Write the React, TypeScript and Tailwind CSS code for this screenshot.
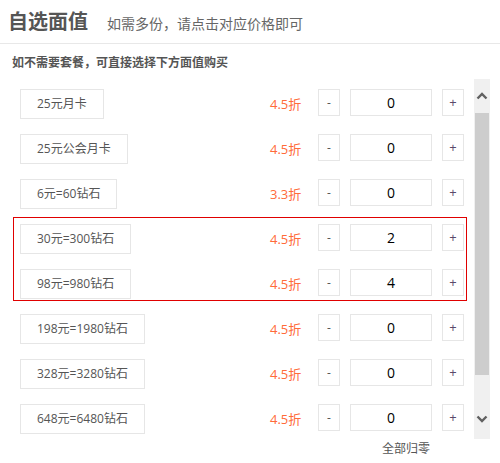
import { useState } from 'react';

interface Item {
  label: string;
  discount: string;
}

const items: Item[] = [
  { label: '25元月卡', discount: '4.5折' },
  { label: '25元公会月卡', discount: '4.5折' },
  { label: '6元=60钻石', discount: '3.3折' },
  { label: '30元=300钻石', discount: '4.5折' },
  { label: '98元=980钻石', discount: '4.5折' },
  { label: '198元=1980钻石', discount: '4.5折' },
  { label: '328元=3280钻石', discount: '4.5折' },
  { label: '648元=6480钻石', discount: '4.5折' },
];

const font = 'font-["Open_Sans","Noto_Sans_CJK_SC",sans-serif]';

function Row({
  item,
  count,
  onChange,
}: {
  item: Item;
  count: number;
  onChange: (n: number) => void;
}) {
  return (
    <div className="flex items-start h-[30px]">
      <div className="w-[250px] shrink-0">
        <button className="h-[30px] px-4 border border-[#e6e6e6] bg-white text-[12px] leading-[28px] text-[#555]">
          {item.label}
        </button>
      </div>
      <div className="w-[48px] shrink-0 h-[30px] leading-[30px] text-[13px] text-[#ff6b3a]">
        {item.discount}
      </div>
      <button
        onClick={() => onChange(Math.max(0, count - 1))}
        className="w-[22px] h-[27px] border border-[#e6e6e6] text-[12px] leading-[24px] text-[#555]"
      >
        -
      </button>
      <div className="ml-[10px] w-[82px] h-[27px] border border-[#e6e6e6] text-center text-[14px] leading-[25px] text-black">
        {count}
      </div>
      <button
        onClick={() => onChange(count + 1)}
        className="ml-[10px] w-[22px] h-[27px] border border-[#e6e6e6] text-[13px] leading-[25px] text-[#5a4a6a]"
      >
        +
      </button>
    </div>
  );
}

export default function App() {
  const [counts, setCounts] = useState<number[]>([0, 0, 0, 2, 4, 0, 0, 0]);

  const setAt = (i: number) => (n: number) =>
    setCounts((c) => c.map((v, j) => (j === i ? n : v)));

  return (
    <div className={`w-[500px] h-[463px] bg-white overflow-hidden ${font}`}>
      {/* 标题 */}
      <div className="h-[44px] flex items-center border-b border-[#e8e8e8]">
        <h2 className="ml-2 text-[20px] font-bold text-[#555] leading-none">
          自选面值
        </h2>
        <span className="ml-[19px] mt-[3px] text-[14px] text-[#666]">
          如需多份，请点击对应价格即可
        </span>
      </div>

      <p className="mt-[10px] ml-3 text-[12px] font-bold text-[#555] leading-[18px]">
        如不需要套餐，可直接选择下方面值购买
      </p>

      {/* 列表 + 滚动条 */}
      <div className="mt-[7px] flex h-[360px]">
        <div className="w-[474px] overflow-hidden pt-[10px] pl-5">
          <div className="flex flex-col gap-[15px]">
            {items.slice(0, 3).map((item, i) => (
              <Row key={i} item={item} count={counts[i]} onChange={setAt(i)} />
            ))}
            <div className="relative flex flex-col gap-[15px]">
              <div className="absolute -top-[7px] -bottom-[2px] -left-[7px] w-[454px] border border-[#e00000] pointer-events-none" />
              {items.slice(3, 5).map((item, k) => (
                <Row
                  key={k + 3}
                  item={item}
                  count={counts[k + 3]}
                  onChange={setAt(k + 3)}
                />
              ))}
            </div>
            {items.slice(5).map((item, k) => (
              <Row
                key={k + 5}
                item={item}
                count={counts[k + 5]}
                onChange={setAt(k + 5)}
              />
            ))}
          </div>
        </div>

        <div className="w-4 bg-[#f0f0f0] flex flex-col items-center">
          <div className="h-[34px] flex items-center justify-center">
            <svg width="12" height="8" viewBox="0 0 12 8">
              <polyline
                points="1.5,6.5 6,2 10.5,6.5"
                fill="none"
                stroke="#606060"
                strokeWidth="2.4"
              />
            </svg>
          </div>
          <div className="w-[14px] h-[262px] bg-[#cdcdcd]" />
          <div className="flex-1 flex items-end justify-center pb-[16px]">
            <svg width="12" height="8" viewBox="0 0 12 8">
              <polyline
                points="1.5,1.5 6,6 10.5,1.5"
                fill="none"
                stroke="#606060"
                strokeWidth="2.4"
              />
            </svg>
          </div>
        </div>
      </div>

      <div className="pl-[382px] mt-[1px] text-[12px] text-[#555] leading-[18px]">
        全部归零
      </div>
    </div>
  );
}
